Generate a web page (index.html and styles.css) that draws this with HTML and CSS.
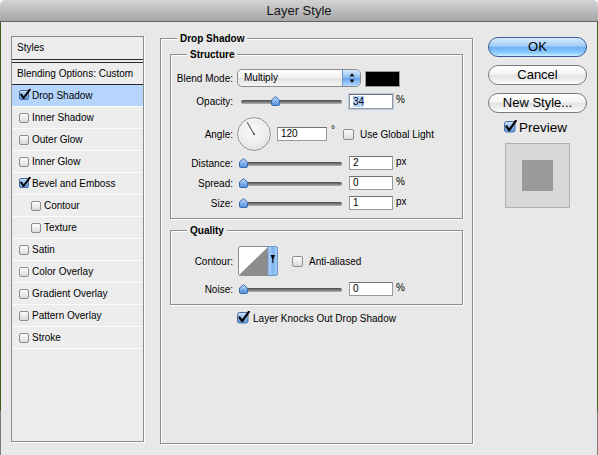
FILE: index.html
```html
<!DOCTYPE html>
<html lang="en">
<head>
    <meta charset="UTF-8">
    <meta name="viewport" content="width=device-width, initial-scale=1.0">
    <title>Layer Style</title>
    <link rel="stylesheet" href="styles.css">
</head>
<body>
    <!-- gradients shared by the little controls -->
    <svg class="defs" width="0" height="0" aria-hidden="true">
        <defs>
            <linearGradient id="cbFill" x1="0" y1="0" x2="0" y2="1">
                <stop offset="0" stop-color="#d4e6fb"/>
                <stop offset="0.5" stop-color="#8ab6ec"/>
                <stop offset="1" stop-color="#5f98e2"/>
            </linearGradient>
            <linearGradient id="thumbFill" x1="0" y1="0" x2="0" y2="1">
                <stop offset="0" stop-color="#cfe2fa"/>
                <stop offset="0.55" stop-color="#7eaeea"/>
                <stop offset="1" stop-color="#4f8ddc"/>
            </linearGradient>
            <linearGradient id="stripFill" x1="0" y1="0" x2="1" y2="0">
                <stop offset="0" stop-color="#b9d8fa"/>
                <stop offset="0.5" stop-color="#7db3ef"/>
                <stop offset="1" stop-color="#a9d2fb"/>
            </linearGradient>
            <radialGradient id="dialFill" cx="0.45" cy="0.4" r="0.65">
                <stop offset="0" stop-color="#fbfbfb"/>
                <stop offset="0.7" stop-color="#ececec"/>
                <stop offset="1" stop-color="#cfcfcf"/>
            </radialGradient>
        </defs>
    </svg>

    <div class="window">
        <div class="titlebar">Layer Style</div>

        <div class="dialog">
            <!-- Daftar style di kiri -->
            <div class="styles-panel">
                <div class="styles-head">Styles</div>
                <div class="blend-opts">Blending Options: Custom</div>
                <ul class="style-list">
                    <li class="selected">
                        <svg class="cb-on" width="12" height="12" viewBox="0 0 12 12"><rect x="0.5" y="1.5" width="9" height="9" rx="1.5" fill="url(#cbFill)" stroke="#4a6ca4"/><path d="M2.2 5.6 L4.6 9 L10.8 0.6" fill="none" stroke="#000" stroke-width="2" stroke-linecap="round" stroke-linejoin="round"/></svg>
                        Drop Shadow
                    </li>
                    <li><span class="cb"></span>Inner Shadow</li>
                    <li><span class="cb"></span>Outer Glow</li>
                    <li><span class="cb"></span>Inner Glow</li>
                    <li>
                        <svg class="cb-on" width="12" height="12" viewBox="0 0 12 12"><rect x="0.5" y="1.5" width="9" height="9" rx="1.5" fill="url(#cbFill)" stroke="#4a6ca4"/><path d="M2.2 5.6 L4.6 9 L10.8 0.6" fill="none" stroke="#000" stroke-width="2" stroke-linecap="round" stroke-linejoin="round"/></svg>
                        Bevel and Emboss
                    </li>
                    <li class="sub"><span class="cb"></span>Contour</li>
                    <li class="sub"><span class="cb"></span>Texture</li>
                    <li><span class="cb"></span>Satin</li>
                    <li><span class="cb"></span>Color Overlay</li>
                    <li><span class="cb"></span>Gradient Overlay</li>
                    <li><span class="cb"></span>Pattern Overlay</li>
                    <li><span class="cb"></span>Stroke</li>
                </ul>
            </div>

            <!-- Panel Drop Shadow di tengah -->
            <div class="group main-group">
                <span class="group-title">Drop Shadow</span>

                <div class="group structure">
                    <span class="group-title">Structure</span>

                    <div class="row blend-row">
                        <span class="label">Blend Mode:</span>
                        <div class="select">
                            <span class="select-text">Multiply</span>
                            <span class="stepper">
                                <svg width="16" height="16" viewBox="0 0 16 16"><path d="M5.5 6.5 L8 3 L10.5 6.5 Z M5.5 9.5 L8 13 L10.5 9.5 Z" fill="#111"/></svg>
                            </span>
                        </div>
                        <span class="swatch"></span>
                    </div>

                    <div class="row opacity-row">
                        <span class="label">Opacity:</span>
                        <div class="slider">
                            <div class="track"></div>
                            <svg class="thumb" style="left:33.6px" width="9" height="10" viewBox="0 0 9 10"><path d="M4.5 0.5 L8.5 4 L8.5 8.3 Q8.5 9.5 7.3 9.5 L1.7 9.5 Q0.5 9.5 0.5 8.3 L0.5 4 Z" fill="url(#thumbFill)" stroke="#3b69ad"/></svg>
                        </div>
                        <div class="field focused"><span class="sel">34</span></div>
                        <span class="unit">%</span>
                    </div>

                    <div class="row angle-row">
                        <span class="label">Angle:</span>
                        <svg class="dial" width="34" height="34" viewBox="0 0 34 34">
                            <circle cx="17" cy="17" r="16.3" fill="url(#dialFill)" stroke="#8c8c8c"/>
                            <circle cx="17" cy="17" r="15.2" fill="none" stroke="#fff" stroke-opacity="0.7"/>
                            <line x1="17" y1="17" x2="10.2" y2="5.2" stroke="#5c5c5c" stroke-width="1.1"/>
                            <circle cx="17" cy="17" r="1.2" fill="#666"/>
                        </svg>
                        <div class="field angle-field">120</div>
                        <span class="deg">&deg;</span>
                        <span class="check-label global-light"><span class="cb big"></span>Use Global Light</span>
                    </div>

                    <div class="row num-row">
                        <span class="label">Distance:</span>
                        <div class="slider">
                            <div class="track"></div>
                            <svg class="thumb" style="left:2px" width="9" height="10" viewBox="0 0 9 10"><path d="M4.5 0.5 L8.5 4 L8.5 8.3 Q8.5 9.5 7.3 9.5 L1.7 9.5 Q0.5 9.5 0.5 8.3 L0.5 4 Z" fill="url(#thumbFill)" stroke="#3b69ad"/></svg>
                        </div>
                        <div class="field">2</div>
                        <span class="unit">px</span>
                    </div>

                    <div class="row num-row">
                        <span class="label">Spread:</span>
                        <div class="slider">
                            <div class="track"></div>
                            <svg class="thumb" style="left:2px" width="9" height="10" viewBox="0 0 9 10"><path d="M4.5 0.5 L8.5 4 L8.5 8.3 Q8.5 9.5 7.3 9.5 L1.7 9.5 Q0.5 9.5 0.5 8.3 L0.5 4 Z" fill="url(#thumbFill)" stroke="#3b69ad"/></svg>
                        </div>
                        <div class="field">0</div>
                        <span class="unit">%</span>
                    </div>

                    <div class="row num-row">
                        <span class="label">Size:</span>
                        <div class="slider">
                            <div class="track"></div>
                            <svg class="thumb" style="left:2px" width="9" height="10" viewBox="0 0 9 10"><path d="M4.5 0.5 L8.5 4 L8.5 8.3 Q8.5 9.5 7.3 9.5 L1.7 9.5 Q0.5 9.5 0.5 8.3 L0.5 4 Z" fill="url(#thumbFill)" stroke="#3b69ad"/></svg>
                        </div>
                        <div class="field">1</div>
                        <span class="unit">px</span>
                    </div>
                </div>

                <div class="group quality">
                    <span class="group-title">Quality</span>

                    <div class="row contour-row">
                        <span class="label">Contour:</span>
                        <svg class="contour" width="40" height="30" viewBox="0 0 40 30">
                            <rect x="0.5" y="0.5" width="39" height="29" rx="2" fill="#fff" stroke="#8a8a8a"/>
                            <path d="M1 29 L30 1 L30 29 Z" fill="#8d8d8d"/>
                            <path d="M30 0.5 H37.5 Q39.5 0.5 39.5 2.5 V27.5 Q39.5 29.5 37.5 29.5 H30 Z" fill="url(#stripFill)" stroke="#6d93c9"/>
                            <path d="M32.6 9 H37 L35.4 13.2 V17 H34.3 V13.2 Z" fill="#000"/>
                        </svg>
                        <span class="check-label anti"><span class="cb big"></span>Anti-aliased</span>
                    </div>

                    <div class="row num-row noise-row">
                        <span class="label">Noise:</span>
                        <div class="slider">
                            <div class="track"></div>
                            <svg class="thumb" style="left:2px" width="9" height="10" viewBox="0 0 9 10"><path d="M4.5 0.5 L8.5 4 L8.5 8.3 Q8.5 9.5 7.3 9.5 L1.7 9.5 Q0.5 9.5 0.5 8.3 L0.5 4 Z" fill="url(#thumbFill)" stroke="#3b69ad"/></svg>
                        </div>
                        <div class="field">0</div>
                        <span class="unit">%</span>
                    </div>
                </div>

                <div class="knocks">
                    <svg class="cb-on big" width="13" height="13" viewBox="0 0 13 13"><rect x="0.5" y="1.5" width="10.5" height="10.5" rx="2" fill="url(#cbFill)" stroke="#4a6ca4"/><path d="M2.5 6.5 L5.2 10.2 L11.8 0.8" fill="none" stroke="#000" stroke-width="2.2" stroke-linecap="round" stroke-linejoin="round"/></svg>
                    Layer Knocks Out Drop Shadow
                </div>
            </div>

            <!-- Tombol di kanan -->
            <div class="side">
                <div class="btn btn-ok">OK</div>
                <div class="btn">Cancel</div>
                <div class="btn">New Style...</div>
                <div class="preview-row">
                    <svg class="cb-on big" width="13" height="13" viewBox="0 0 13 13"><rect x="0.5" y="1.5" width="10.5" height="10.5" rx="2" fill="url(#cbFill)" stroke="#4a6ca4"/><path d="M2.5 6.5 L5.2 10.2 L11.8 0.8" fill="none" stroke="#000" stroke-width="2.2" stroke-linecap="round" stroke-linejoin="round"/></svg>
                    Preview
                </div>
                <div class="preview-box">
                    <div class="preview-swatch"></div>
                </div>
            </div>
        </div>
    </div>
</body>
</html>
```

FILE: styles.css
```css
/* Gaya umum */
body {
    margin: 0;
    background-color: #fff;
    font-family: "Liberation Sans", Arial, sans-serif;
    font-size: 10px;
    color: #000;
}

.defs {
    position: absolute;
    width: 0;
    height: 0;
}

.window {
    width: 598px;
    height: 455px;
    overflow: hidden;
}

/* Title bar abu-abu */
.titlebar {
    height: 22px;
    box-sizing: border-box;
    border-radius: 5px 5px 0 0;
    border-bottom: 1px solid #666;
    background: linear-gradient(to bottom, #d4d4d4, #a6a6a6);
    text-align: center;
    line-height: 22px;
    font-size: 13px;
    color: #151515;
}

/* Isi dialog */
.dialog {
    height: 433px;
    box-sizing: border-box;
    display: flex;
    align-items: flex-start;
    padding: 14px 0 0 10px;
    background-color: #e8e8e8;
    border-style: solid;
    border-width: 0 1px;
    border-image: linear-gradient(to bottom, #3f5c1f 388px, #7c7c7c 388px) 1;
}

/* Panel daftar styles */
.styles-panel {
    width: 133px;
    height: 406px;
    box-sizing: border-box;
    background-color: #ededed;
    border: 1px solid #8b8b8b;
    box-shadow: 1px 1px 0 #fff;
}

.styles-head {
    height: 22px;
    line-height: 22px;
    padding-left: 5px;
    border-bottom: 1px solid #2a2a2a;
    margin-bottom: 2px;
}

.blend-opts {
    height: 21px;
    line-height: 21px;
    padding-left: 5px;
    border-top: 1px solid #2a2a2a;
    border-bottom: 1px solid #2a2a2a;
}

.style-list {
    list-style: none;
    margin: 0;
    padding: 0;
}

.style-list li {
    height: 21px;
    border-bottom: 1px solid #fbfbfb;
    padding-left: 7px;
    display: flex;
    align-items: center;
    gap: 3px;
}

.style-list li.selected {
    background-color: #b6d5fd;
}

.style-list li.sub {
    padding-left: 19px;
}

/* Checkbox */
.cb {
    width: 8px;
    height: 8px;
    flex: none;
    border: 1px solid #8d8d8d;
    border-radius: 2px;
    background: linear-gradient(to bottom, #fdfdfd, #dadada);
}

.cb.big {
    width: 9px;
    height: 9px;
}

.cb-on {
    flex: none;
    margin-right: -2px;
    margin-top: -2px;
}

/* Group box (kayak fieldset) */
.group {
    position: relative;
    box-sizing: border-box;
    border: 1px solid #8e8e8e;
    box-shadow: 1px 1px 0 #fff, inset 1px 1px 0 #fff;
}

.group-title {
    position: absolute;
    top: -6px;
    left: 16px;
    padding: 0 3px;
    line-height: 12px;
    font-weight: bold;
    background-color: #e8e8e8;
}

.main-group {
    width: 313px;
    height: 406px;
    margin: 2px 0 0 16px;
}

.structure {
    margin: 15px 9px 0;
    padding: 14px 0 8px;
}

.quality {
    margin: 11px 9px 0;
    padding: 15px 0 8px;
}

.row {
    display: flex;
    align-items: center;
}

.label {
    width: 62px;
    margin-right: 4px;
    text-align: right;
    flex: none;
}

.blend-row {
    height: 18px;
}

.opacity-row {
    height: 16px;
    margin-top: 6px;
}

.angle-row {
    height: 34px;
    margin-top: 8px;
}

.num-row {
    height: 14px;
    margin-top: 6px;
}

.angle-row + .num-row {
    margin-top: 5px;
}

.contour-row {
    height: 30px;
}

.noise-row {
    margin-top: 6px;
}

/* Dropdown blend mode */
.select {
    width: 124px;
    height: 18px;
    box-sizing: border-box;
    display: flex;
    border: 1px solid #8a8a8a;
    border-radius: 5px;
    background: linear-gradient(to bottom, #fff, #f1f1f1 50%, #e2e2e2 51%, #f4f4f4);
}

.select-text {
    flex: 1;
    padding-left: 6px;
    line-height: 16px;
}

.stepper {
    width: 17px;
    border-left: 1px solid #6f95cc;
    border-radius: 0 4px 4px 0;
    background: linear-gradient(to bottom, #d7e9fc, #8dbcf0 48%, #66a3ec 52%, #b3dafe);
    display: flex;
    align-items: center;
    justify-content: center;
}

.swatch {
    width: 35px;
    height: 16px;
    box-sizing: border-box;
    margin-left: 4px;
    align-self: flex-end;
    background-color: #000;
    border: 1px solid #9a9a9a;
}

/* Slider */
.slider {
    position: relative;
    width: 106px;
    height: 10px;
    flex: none;
}

.track {
    width: 101px;
    height: 4px;
    margin: 4px 0 0 4px;
    border-radius: 2px;
    background: linear-gradient(to bottom, #4a4a4a, #7a7a7a 50%, #b5b5b5);
}

.thumb {
    position: absolute;
    top: 0;
}

/* Kotak angka */
.field {
    width: 44px;
    height: 14px;
    box-sizing: border-box;
    margin-left: 6px;
    padding-left: 3px;
    line-height: 12px;
    background-color: #fff;
    border: 1px solid #9a9a9a;
    border-top-color: #707070;
}

.field.focused {
    height: 15px;
    line-height: 13px;
    box-shadow: 0 0 0 1px #b4c9e4;
}

.sel {
    background-color: #b6d5fd;
}

.unit {
    margin-left: 3px;
    margin-bottom: 3px;
}

.dial {
    flex: none;
}

.angle-field {
    width: 50px;
}

.deg {
    margin-left: 4px;
    align-self: flex-start;
    margin-top: 7px;
}

.check-label {
    display: flex;
    align-items: center;
    gap: 6px;
}

.global-light {
    margin-left: 8px;
}

.contour {
    flex: none;
    margin-left: 1px;
}

.anti {
    margin-left: 14px;
}

.knocks {
    display: flex;
    align-items: center;
    justify-content: center;
    gap: 5px;
    margin-top: 6px;
    height: 14px;
}

/* Kolom tombol kanan */
.side {
    width: 99px;
    margin-left: 15px;
    display: flex;
    flex-direction: column;
}

.btn {
    height: 20px;
    box-sizing: border-box;
    margin-top: 8px;
    border: 1px solid #7a7a7a;
    border-radius: 10px;
    background: linear-gradient(to bottom, #fff, #f4f4f4 45%, #e3e3e3 52%, #f2f2f2 85%, #fff);
    font-size: 13px;
    line-height: 18px;
    text-align: center;
}

.btn-ok {
    margin-top: 1px;
    border-color: #3a5a98;
    background: linear-gradient(to bottom, #d7ebfe, #a3cdf6 45%, #6daef0 52%, #8ccdfd 82%, #c9efff);
}

.preview-row {
    display: flex;
    align-items: center;
    gap: 4px;
    height: 14px;
    margin: 7px 0 0 16px;
    font-size: 13.5px;
}

.preview-box {
    width: 65px;
    height: 65px;
    box-sizing: border-box;
    margin: 9px 0 0 17px;
    background-color: #d8d8d8;
    border: 1px solid #b0b0b0;
    display: flex;
    align-items: center;
    justify-content: center;
}

.preview-swatch {
    width: 31px;
    height: 31px;
    background-color: #9a9a9a;
}
```
